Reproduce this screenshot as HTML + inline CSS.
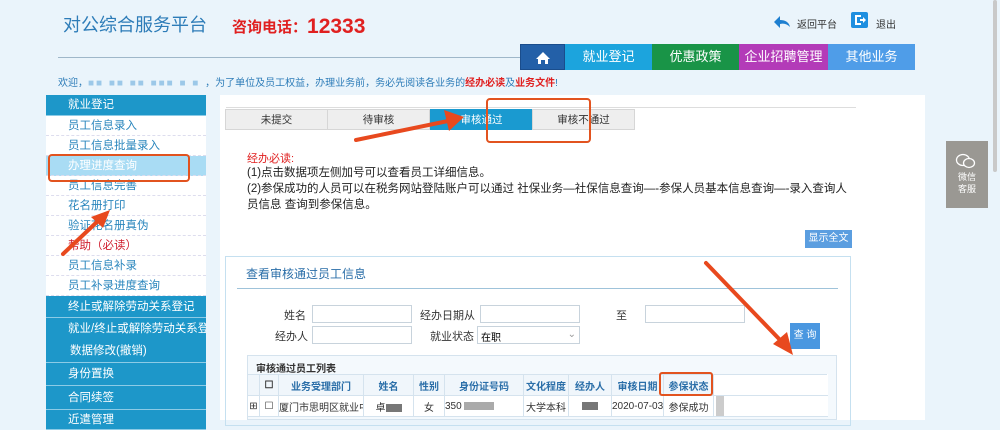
<!DOCTYPE html>
<html><head><meta charset="utf-8"><style>
*{margin:0;padding:0;box-sizing:border-box}
body{width:1000px;height:420px;overflow:hidden;background:#eaf4fb;font-family:"Liberation Sans","Noto Sans CJK SC",sans-serif;position:relative;font-size:12px}
.a{position:absolute;white-space:nowrap}
.nav{position:absolute;top:44px;height:26px;color:#fff;font-size:13px;text-align:center;line-height:26px}
.sb{position:absolute;left:46px;width:160px;font-size:11.5px;padding-left:22px;white-space:nowrap;overflow:hidden}
.sh{background:#1d97c9;color:#fff;border-bottom:1px solid #8ccbe6}
.si{background:#fff;color:#2a86bd;border-bottom:1px dashed #dde}
.tab{position:absolute;top:109px;height:21px;width:103px;background:#eeeeee;border:1px solid #d6d6d6;text-align:center;line-height:20px;font-size:10.5px;color:#333}
.inp{position:absolute;height:18px;background:#fff;border:1px solid #c8d3dc}
.lb{position:absolute;font-size:11px;color:#333}
table{table-layout:fixed}
td{border:1px solid #d5e3ee;text-align:center;font-size:10px;color:#333;height:21px;overflow:hidden;white-space:nowrap}
.blur{display:inline-block;background:#777;height:8px;vertical-align:middle}
</style></head><body>
<div class="a" style="left:63px;top:11px;font-size:18px;color:#2d7cb8">对公综合服务平台</div>
<div class="a" style="left:232px;top:14px;font-size:15px;color:#e02020;font-weight:bold">咨询电话：<span style="font-size:21px;position:relative;top:1px">12333</span></div>
<div class="a" style="left:58px;top:57px;width:462px;height:1px;background:#9fb7c9"></div>
<svg class="a" style="left:772px;top:14px" width="20" height="16" viewBox="0 0 20 16"><path d="M2 8 L8 2 L8 6 C13 6 17 8 18 13 C15 10 12 9 8 10 L8 14 Z" fill="#1e7fd0"/></svg>
<div class="a" style="left:797px;top:16px;font-size:10px;color:#333">返回平台</div>
<div class="a" style="left:851px;top:12px;width:17px;height:16px;background:#1e8fe0;border-radius:2px"></div>
<svg class="a" style="left:853px;top:14px" width="14" height="12"><path d="M2 1h6v2H4v6h4v2H2z M7 5h3V3l3 3-3 3V7H7z" fill="#fff"/></svg>
<div class="a" style="left:876px;top:16px;font-size:10px;color:#333">退出</div>
<div class="nav" style="left:520px;width:45px;background:#2360a8;border:1px solid #1a4d8c"><svg width="16" height="14" style="margin-top:6px"><path d="M8 1 L15 8 H13 V13 H10 V9 H6 V13 H3 V8 H1 Z" fill="#fff"/></svg></div>
<div class="nav" style="left:565px;width:87px;background:#1ca4dd">就业登记</div>
<div class="nav" style="left:652px;width:87px;background:#199447">优惠政策</div>
<div class="nav" style="left:739px;width:89px;background:#b33bb8">企业招聘管理</div>
<div class="nav" style="left:828px;width:87px;background:#4f9de8">其他业务</div>
<div class="a" style="left:58px;top:74px;font-size:10px;color:#2d7cb8">欢迎，<span style="color:#9cc8e8;letter-spacing:2px">■■ ■■ ■■ ■■■ ■ ■ </span>，为了单位及员工权益，办理业务前，务必先阅读各业务的<b style="color:#e02020">经办必读</b>及<b style="color:#e02020">业务文件</b>!</div>
<div class="a" style="left:220px;top:95px;width:705px;height:325px;background:#fff"></div>
<div class="a" style="left:226px;top:107px;width:630px;height:1px;background:#ddd"></div>
<div class="sb sh" style="top:95px;height:21px;line-height:21px">就业登记</div>
<div class="sb si" style="top:116px;height:20px;line-height:20px">员工信息录入</div>
<div class="sb si" style="top:136px;height:20px;line-height:20px">员工信息批量录入</div>
<div class="sb si" style="top:156px;height:20px;line-height:20px;background:#a9dcf4;color:#fff">办理进度查询</div>
<div class="sb si" style="top:176px;height:20px;line-height:20px">员工信息完善</div>
<div class="sb si" style="top:196px;height:20px;line-height:20px">花名册打印</div>
<div class="sb si" style="top:216px;height:20px;line-height:20px">验证花名册真伪</div>
<div class="sb si" style="top:236px;height:20px;line-height:20px;color:#d02030">帮助（必读）</div>
<div class="sb si" style="top:256px;height:20px;line-height:20px">员工信息补录</div>
<div class="sb si" style="top:276px;height:20px;line-height:20px">员工补录进度查询</div>
<div class="sb sh" style="top:296px;height:22px;line-height:22px">终止或解除劳动关系登记</div>
<div class="sb sh" style="top:318px;height:45px;line-height:22px;padding-left:22px">就业/终止或解除劳动关系登记<br><span style="padding-left:2px">数据修改(撤销)</span></div>
<div class="sb sh" style="top:363px;height:23px;line-height:23px">身份置换</div>
<div class="sb sh" style="top:386px;height:24px;line-height:24px">合同续签</div>
<div class="sb sh" style="top:410px;height:20px;line-height:20px">近遣管理</div>
<div class="tab" style="left:225px">未提交</div>
<div class="tab" style="left:327px">待审核</div>
<div class="tab" style="left:430px;background:#1a9ad0;color:#fff;border-color:#1a9ad0">审核通过</div>
<div class="tab" style="left:532px">审核不通过</div>
<div class="a" style="left:247px;top:150px;font-size:11px;color:#e02020">经办必读:</div>
<div class="a" style="left:247px;top:165px;font-size:11.5px;color:#222;line-height:16px">(1)点击数据项左侧加号可以查看员工详细信息。<br>(2)参保成功的人员可以在税务网站登陆账户可以通过 社保业务—社保信息查询—-参保人员基本信息查询—-录入查询人<br>员信息 查询到参保信息。</div>
<div class="a" style="left:805px;top:230px;width:47px;height:18px;background:#5b9ee0;color:#fff;font-size:10px;text-align:center;line-height:18px">显示全文</div>
<div class="a" style="left:225px;top:256px;width:626px;height:170px;border:1px solid #c5e0f0"></div>
<div class="a" style="left:246px;top:265px;font-size:12px;color:#2a6ea8">查看审核通过员工信息</div>
<div class="a" style="left:237px;top:288px;width:601px;height:1px;background:#9fc3da"></div>
<div class="lb" style="left:284px;top:307px">姓名</div><div class="inp" style="left:312px;top:305px;width:100px"></div>
<div class="lb" style="left:420px;top:307px">经办日期从</div><div class="inp" style="left:480px;top:305px;width:100px"></div>
<div class="lb" style="left:616px;top:307px">至</div><div class="inp" style="left:645px;top:305px;width:100px"></div>
<div class="lb" style="left:275px;top:328px">经办人</div><div class="inp" style="left:312px;top:326px;width:100px"></div>
<div class="lb" style="left:430px;top:328px">就业状态</div><div class="inp" style="left:477px;top:326px;width:103px;font-size:10px;padding:2px 3px">在职<span style="float:right;color:#999">⌄</span></div>
<div class="a" style="left:790px;top:323px;width:30px;height:26px;background:#4a97e0;color:#fff;font-size:10px;text-align:center;line-height:26px">查 询</div>
<div class="a" style="left:247px;top:355px;width:590px;height:65px;border:1px solid #d5e3ee;background:#f4f9fd"></div>
<div class="a" style="left:256px;top:360px;font-size:10px;font-weight:bold;color:#333">审核通过员工列表</div>
<table class="a" style="left:247px;top:374px;border-collapse:collapse;width:580px;background:#fff">
<colgroup><col style="width:12px"><col style="width:19px"><col style="width:85px"><col style="width:50px"><col style="width:31px"><col style="width:79px"><col style="width:45px"><col style="width:43px"><col style="width:52px"><col style="width:50px"><col style="width:114px"></colgroup>
<tr style="background:#f0f6fb;font-weight:bold"><td></td><td>☐</td><td style="color:#2a6ea8">业务受理部门</td><td style="color:#2a6ea8">姓名</td><td style="color:#2a6ea8">性别</td><td style="color:#2a6ea8">身份证号码</td><td style="color:#2a6ea8">文化程度</td><td style="color:#2a6ea8">经办人</td><td style="color:#2a6ea8">审核日期</td><td style="color:#2a6ea8">参保状态</td><td style="background:#fff;border-right-color:#fff"></td></tr>
<tr><td>⊞</td><td>☐</td><td>厦门市思明区就业中心</td><td>卓<span class="blur" style="width:16px"></span></td><td>女</td><td style="text-align:left">350 <span class="blur" style="width:30px;background:#aaa"></span></td><td>大学本科</td><td><span class="blur" style="width:16px"></span></td><td>2020-07-03</td><td>参保成功</td><td style="background:#fff;border-right-color:#fff"><div style="width:8px;height:20px;background:#ccc;margin-left:2px"></div></td></tr>
</table>
<div class="a" style="left:946px;top:141px;width:42px;height:67px;background:#9a9893;color:#fff;font-size:9px;text-align:center;line-height:12px;padding-top:30px">微信<br>客服</div>
<svg class="a" style="left:955px;top:152px" width="22" height="18"><ellipse cx="8" cy="8" rx="6.5" ry="5.5" fill="none" stroke="#fff" stroke-width="1.3"/><ellipse cx="14" cy="11" rx="5.5" ry="4.5" fill="#9a9893" stroke="#fff" stroke-width="1.3"/></svg>
<div class="a" style="left:993px;top:0;width:4px;height:172px;background:#c9c9c9;border-radius:2px"></div>
<svg class="a" style="left:0;top:0" width="1000" height="420">
<g fill="none" stroke="#e2531f" stroke-width="2"><rect x="487" y="99" width="103" height="43" rx="3"/><rect x="49" y="155" width="140" height="26" rx="3"/><rect x="660" y="373" width="52" height="22" rx="2"/></g>
<g stroke="#e8491e" stroke-width="4" stroke-linecap="round"><line x1="356" y1="140" x2="448" y2="121"/><line x1="63" y1="254" x2="99" y2="220"/><line x1="706" y1="263" x2="783" y2="343"/></g>
<g fill="#e8491e"><polygon points="464,117 444,110 449,131"/><polygon points="110,210 91,217 103,228"/><polygon points="793,355 773,344 787,332"/></g>
</svg>
</body></html>
